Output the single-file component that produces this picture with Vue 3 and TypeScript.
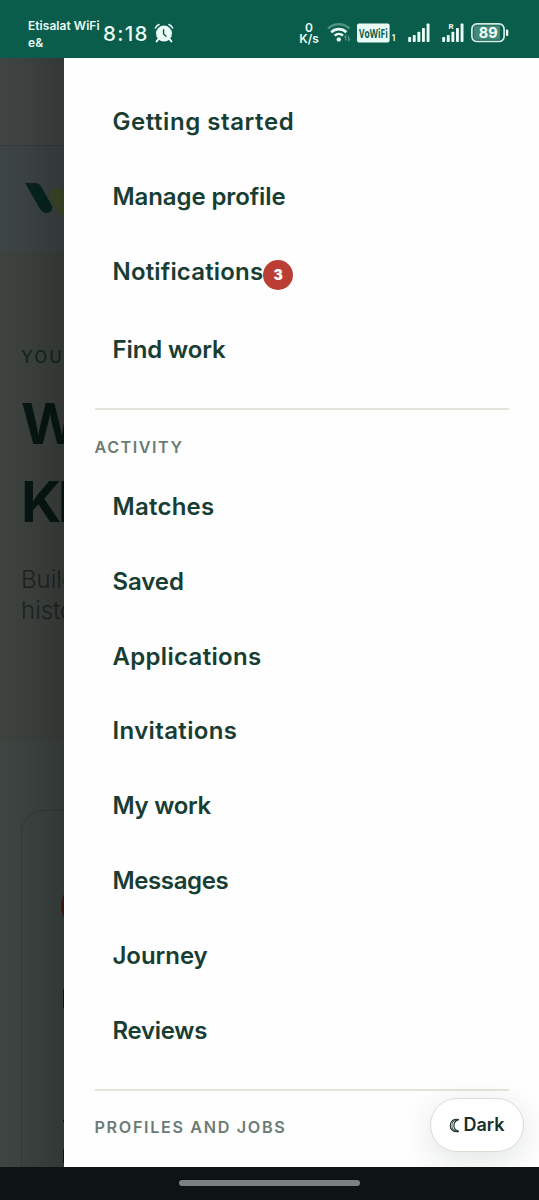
<script setup lang="ts">
interface MenuItem {
  label: string
  tracking: number
  badge?: number
}

const primary: MenuItem[] = [
  { label: 'Getting started', tracking: 0.56 },
  { label: 'Manage profile', tracking: -0.1 },
  { label: 'Notifications', tracking: 0.17, badge: 3 },
  { label: 'Find work', tracking: -0.1 },
]

const activity: MenuItem[] = [
  { label: 'Matches', tracking: 0.25 },
  { label: 'Saved', tracking: -0.1 },
  { label: 'Applications', tracking: 0.32 },
  { label: 'Invitations', tracking: 0.36 },
  { label: 'My work', tracking: -0.28 },
  { label: 'Messages', tracking: -0.38 },
  { label: 'Journey', tracking: -0.05 },
  { label: 'Reviews', tracking: -0.3 },
]
</script>

<template>
  <div class="phone">
    <header class="status">
      <div class="carrier">Etisalat WiFi<br />e&amp;</div>
      <div class="clock">8:18</div>
      <svg class="alarm" width="20" height="20" viewBox="0 0 20 20">
        <circle cx="10" cy="10.6" r="8" fill="#e9fbf5" />
        <path d="M1.4 5 Q2.6 2.6 5 1.6 M18.6 5 Q17.4 2.6 15 1.6" fill="none" stroke="#e9fbf5" stroke-width="1.6" stroke-linecap="round" />
        <path d="M4.2 16.4 L2.6 18.4 M15.8 16.4 L17.4 18.4" stroke="#e9fbf5" stroke-width="2" stroke-linecap="round" />
        <path d="M9.6 6.6 V11 L12 13.2" fill="none" stroke="#0a5c4b" stroke-width="1.4" stroke-linecap="round" />
      </svg>
      <div class="speed"><span>0</span><span>K/s</span></div>
      <svg class="wifi" width="24" height="21" viewBox="0 0 24 21">
        <g fill="none" stroke-linecap="butt">
          <path d="M1 6.6 A15.5 15.5 0 0 1 22.6 6.6" stroke="#4f9182" stroke-width="2.6" />
          <path d="M4.2 10.2 A11 11 0 0 1 19.4 10.2" stroke="#e9fbf5" stroke-width="2.6" />
          <path d="M7.6 13.7 A6.2 6.2 0 0 1 16 13.7" stroke="#e9fbf5" stroke-width="2.5" />
          <path d="M18.8 18.5 V13.8 L17.3 15.5 M21.5 13.8 V18.5 L23 16.8" stroke="#4f9182" stroke-width="1.3" />
        </g>
        <circle cx="11.8" cy="17.4" r="2.2" fill="#e9fbf5" />
      </svg>
      <svg class="vowifi" width="38" height="20" viewBox="0 0 38 20">
        <rect x="0" y="0.5" width="32.6" height="19" rx="2" fill="#e9fbf5" />
        <text x="2" y="14.6" textLength="28.8" lengthAdjust="spacingAndGlyphs" class="vo">VoWiFi</text>
        <text x="34.2" y="17.6" class="one">1</text>
      </svg>
      <svg class="bars first" width="23" height="21" viewBox="0 0 23 21">
        <g fill="#e9fbf5">
          <rect x="0.2" y="15" width="2.9" height="5" rx="0.8" />
          <rect x="4.8" y="13" width="2.9" height="7" rx="0.8" />
          <rect x="9.4" y="9.8" width="2.9" height="10.2" rx="0.8" />
          <rect x="14" y="6" width="2.9" height="14" rx="0.8" />
          <rect x="18.6" y="1.5" width="2.9" height="18.5" rx="0.8" />
        </g>
      </svg>
      <svg class="bars second" width="23" height="21" viewBox="0 0 23 21">
        <g fill="#e9fbf5">
          <rect x="0.2" y="15" width="2.9" height="5" rx="0.8" />
          <rect x="4.8" y="13" width="2.9" height="7" rx="0.8" />
          <rect x="9.4" y="9.8" width="2.9" height="10.2" rx="0.8" />
          <rect x="14" y="6" width="2.9" height="14" rx="0.8" />
          <rect x="18.6" y="1.5" width="2.9" height="18.5" rx="0.8" />
        </g>
        <text x="6.6" y="6.8" class="roam">R</text>
      </svg>
      <svg class="battery" width="38" height="20" viewBox="0 0 38 20">
        <rect x="0.9" y="0.9" width="32.2" height="17.6" rx="5" fill="none" stroke="#d5ece5" stroke-width="1.7" />
        <path d="M6 2.6 H29 V16.8 H6 A3.4 3.4 0 0 1 2.6 13.4 V6 A3.4 3.4 0 0 1 6 2.6Z" fill="#43897a" />
        <rect x="34.9" y="6.5" width="2.4" height="6.6" rx="1" fill="#e9fbf5" />
        <text x="17.2" y="14.9" text-anchor="middle" class="pct">89</text>
      </svg>
    </header>

    <main class="stage">
      <div class="page">
        <div class="topbar"></div>
        <div class="brandbar">
          <svg class="logo" width="50" height="40" viewBox="0 0 50 40">
            <path d="M30 7 Q36 4 40 9 L48 22 V34 Q37 35 33 29 L27 18 Q24 11 30 7Z" fill="#3f4b27" />
            <path d="M1 1 H11 Q15 1 17.2 4.5 L27.3 22.5 Q29.5 27 26.5 29.5 Q23 32.5 18.5 29.5 Q17 28.5 15.5 26Z" fill="#06251d" />
          </svg>
        </div>
        <section class="hero">
          <p class="eyebrow">YOU</p>
          <h1>W<br />KI</h1>
          <p class="lead">Build<br />histo</p>
        </section>
        <section class="cards">
          <div class="card">
            <i class="avatar"></i>
            <i class="stem title"></i>
            <i class="stem meta"></i>
            <i class="stem foot"></i>
          </div>
        </section>
        <div class="shade"></div>
      </div>

      <aside class="drawer">
        <nav>
          <a v-for="item in primary" :key="item.label" class="link" :class="{ tall: item.badge }">
            <span :style="{ letterSpacing: item.tracking + 'px' }">{{ item.label }}</span>
            <b v-if="item.badge" class="badge">{{ item.badge }}</b>
          </a>
        </nav>
        <section class="group">
          <h2 class="activity">ACTIVITY</h2>
          <a v-for="item in activity" :key="item.label" class="link">
            <span :style="{ letterSpacing: item.tracking + 'px' }">{{ item.label }}</span>
          </a>
        </section>
        <section class="group last">
          <h2>PROFILES AND JOBS</h2>
        </section>
      </aside>

      <button class="theme">
        <svg width="11" height="15" viewBox="0 0 11 15">
          <path d="M9.8 1.6 C5 0.4 1.2 3.2 1.2 7.5 S5 14.6 9.8 13.4 C6.7 12.6 4.9 10.6 4.9 7.5 S6.7 2.4 9.8 1.6Z" fill="none" stroke="#17302a" stroke-width="1.1" />
          <path d="M7.2 2 C4 2.6 3 4.8 3 7.5 S4 12.4 7.2 13" fill="none" stroke="#17302a" stroke-width="0.8" />
        </svg>
        <span>Dark</span>
      </button>
    </main>

    <footer class="gesture"><i></i></footer>
  </div>
</template>

<style>
body {
  margin: 0;
}
</style>

<style scoped>
.phone {
  width: 539px;
  height: 1200px;
  display: flex;
  flex-direction: column;
  overflow: hidden;
  font-family: Inter, 'Liberation Sans', sans-serif;
}

.status {
  box-sizing: border-box;
  height: 58px;
  flex: none;
  display: flex;
  align-items: flex-start;
  padding-left: 28px;
  background: #0a5c4b;
  color: #e9fbf5;
}
.status svg {
  flex: none;
  overflow: visible;
}
.carrier {
  width: 75px;
  margin-top: 17px;
  font: 600 12px/17px Inter, sans-serif;
  white-space: nowrap;
  letter-spacing: 0.05px;
}
.clock {
  width: 51px;
  margin-top: 22px;
  font: 500 20.5px/24px Inter, sans-serif;
  letter-spacing: 1.3px;
  white-space: nowrap;
}
.alarm {
  margin-top: 23px;
}
.speed {
  display: flex;
  flex-direction: column;
  align-items: center;
  width: 22px;
  margin: 22px 0 0 124px;
  font: 600 12px/11px Inter, sans-serif;
}
.wifi {
  margin: 22px 0 0 7px;
}
.vowifi {
  margin: 23px 0 0 6px;
}
.bars {
  margin-top: 22px;
}
.first {
  margin-left: 13px;
}
.second {
  margin-left: 11px;
}
.battery {
  margin: 23px 0 0 6px;
}
.vo {
  font: 700 13px 'Open Sans', sans-serif;
  fill: #0a5c4b;
}
.one {
  font: 600 9px Roboto, sans-serif;
  fill: #e9fbf5;
}
.roam {
  font: 700 8px Roboto, sans-serif;
  fill: #e9fbf5;
}
.pct {
  font: 700 14.5px Inter, sans-serif;
  fill: #f2fffb;
}

.stage {
  position: relative;
  display: flex;
  height: 1109px;
  flex: none;
  overflow: hidden;
}
.page {
  position: relative;
  width: 64px;
  flex: none;
  overflow: hidden;
  background: #3e4543;
}
.topbar {
  box-sizing: border-box;
  height: 88px;
  border-bottom: 1px solid #363c3a;
  background: #404543;
}
.brandbar {
  box-sizing: border-box;
  height: 105px;
  padding: 36px 0 0 24px;
  background: #3e4545;
}
.hero {
  box-sizing: border-box;
  height: 491px;
  padding: 94px 0 0 21px;
  background: #3e433f;
  white-space: nowrap;
}
.eyebrow {
  margin: 0;
  font-size: 17px;
  line-height: 24px;
  font-weight: 500;
  letter-spacing: 2px;
  color: #12291f;
}
h1 {
  margin: 17px 0 0;
  font-size: 56px;
  line-height: 77.5px;
  font-weight: 700;
  letter-spacing: -3.5px;
  color: #071713;
}
.lead {
  margin: 23px 0 0;
  font-size: 24px;
  line-height: 31px;
  font-weight: 300;
  color: #1d2421;
}
.cards {
  padding: 68px 0 0 21px;
}
.card {
  box-sizing: border-box;
  width: 480px;
  height: 600px;
  padding: 70px 0 0 39px;
  border: 1px solid #363c39;
  border-radius: 22px;
  background: #3d4543;
}
.avatar {
  display: block;
  width: 50px;
  height: 50px;
  border-radius: 50%;
  background: #461a15;
}
.stem {
  display: block;
  width: 20px;
  margin-left: 2px;
  background: #0a1613;
}
.title {
  height: 19px;
  margin-top: 58px;
}
.meta {
  height: 2px;
  margin-top: 112px;
}
.foot {
  height: 14px;
  margin-top: 27px;
}
.shade {
  position: absolute;
  inset: 0;
  background: linear-gradient(90deg, rgba(0, 0, 0, 0), rgba(0, 0, 0, 0.06) 40%, rgba(0, 0, 0, 0.2));
}

.drawer {
  box-sizing: border-box;
  width: 475px;
  padding: 26.7px 30px 0 30.5px;
  background: #fefefe;
}
.link {
  box-sizing: border-box;
  display: flex;
  height: 74.8px;
  padding: 22.4px 0 0 18px;
  font-size: 24px;
  line-height: 30px;
  font-weight: 600;
  color: #183d33;
  white-space: nowrap;
}
.tall {
  height: 78.2px;
}
.badge {
  width: 30px;
  height: 30px;
  margin-top: 3.3px;
  border-radius: 50%;
  background: #ba3e34;
  color: #fff;
  font-size: 14px;
  line-height: 30px;
  text-align: center;
}
.group {
  margin-top: 20.8px;
  border-top: 2px solid #e4e3dc;
}
h2 {
  margin: 0;
  padding-top: 26.2px;
  height: 33.3px;
  font-size: 16.2px;
  line-height: 22px;
  font-weight: 600;
  letter-spacing: 1.65px;
  color: #6b7c75;
}
.activity {
  letter-spacing: 1.5px;
}
.last {
  margin-top: 20.8px;
}
.last h2 {
  padding-top: 25px;
}

.theme {
  position: absolute;
  right: 15px;
  bottom: 15px;
  box-sizing: border-box;
  width: 94px;
  height: 54px;
  display: flex;
  align-items: center;
  justify-content: center;
  gap: 3px;
  padding: 0;
  border: 1px solid #deddd3;
  border-radius: 27px;
  background: #fff;
  box-shadow: 0 8px 32px rgba(20, 40, 30, 0.12);
  font: 600 18px/24px Inter, sans-serif;
  color: #17302a;
}

.gesture {
  flex: 1;
  display: flex;
  justify-content: center;
  background: #0e1416;
}
.gesture i {
  width: 181px;
  height: 6px;
  margin-top: 13px;
  border-radius: 3px;
  background: #7c8182;
}
</style>
